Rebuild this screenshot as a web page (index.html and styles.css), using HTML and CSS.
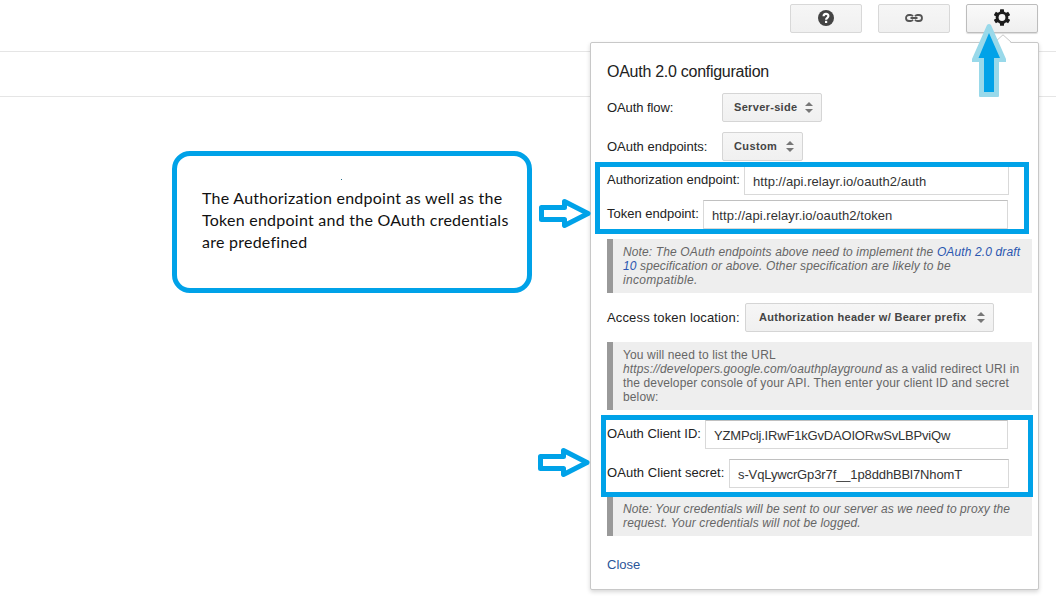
FILE: index.html
```html
<!DOCTYPE html>
<html lang="en">
<head>
<meta charset="utf-8">
<title>OAuth 2.0 configuration</title>
<link rel="stylesheet" href="styles.css">
</head>
<body>
<header class="toolbar">
  <button class="tool" aria-label="Help">
    <svg width="16" height="16" viewBox="0 0 16 16"><circle cx="8" cy="8" r="8" fill="#444"/><path d="M5.600 6.200C5.600 3.200 10.400 3.200 10.400 6C10.400 7.800 8.100 7.800 8.100 9.800" fill="none" stroke="#fff" stroke-width="2.200"/><rect x="7" y="10.800" width="2.200" height="2.200" fill="#fff"/></svg>
  </button>
  <button class="tool" aria-label="Link">
    <svg width="18" height="8" viewBox="0 0 18 8" fill="none" stroke="#555" stroke-width="1.8"><path d="M8 2.200C7.300 1.300 6.500 1 5.500 1H4C2.200 1 1 2.200 1 4S2.200 7 4 7H5.500C6.500 7 7.300 6.700 8 5.800M10 2.200C10.700 1.300 11.500 1 12.500 1H14C15.800 1 17 2.200 17 4S15.800 7 14 7H12.500C11.500 7 10.700 6.700 10 5.800M5.500 4H12.500"/></svg>
  </button>
  <button class="tool active" aria-label="Settings">
    <svg width="16" height="17" viewBox="-8 -8.500 16 17"><g fill="#1c1c1c"><rect x="-2" y="-8.300" width="4" height="16.600" rx=".6"/><rect x="-2" y="-8.300" width="4" height="16.600" rx=".6" transform="rotate(60)"/><rect x="-2" y="-8.300" width="4" height="16.600" rx=".6" transform="rotate(120)"/><circle r="6.300"/></g><circle r="3.400" fill="#f5f5f5"/></svg>
  </button>
</header>
<div class="subbar"></div>

<section class="panel">
  <svg class="caret" width="18" height="10" viewBox="0 0 18 10"><path d="M0 10L9 1L18 10" fill="#fff"/><path d="M.5 8.500L9 .8L17.500 8.500" fill="none" stroke="#c8c8c8"/></svg>
  <h1>OAuth 2.0 configuration</h1>
  <div class="row"><label class="fixed flow">OAuth flow:</label><button class="select server"><span>Server-side</span><i class="updown"></i></button></div>
  <div class="row"><label class="fixed">OAuth endpoints:</label><button class="select custom"><span>Custom</span><i class="updown"></i></button></div>
  <div class="row tight"><label class="auth-label">Authorization endpoint:</label><div class="field to-edge auth">http://api.relayr.io/oauth2/auth</div></div>
  <div class="row tight"><label class="token-label">Token endpoint:</label><div class="field token">http://api.relayr.io/oauth2/token</div></div>
  <p class="note"><em>Note: The OAuth endpoints above need to implement the <a>OAuth 2.0 draft</a><br><a>10</a> specification or above. Other specification are likely to be<br><span class="wide">incompatible.</span></em></p>
  <div class="row"><label class="access-label">Access token location:</label><button class="select bearer"><span>Authorization header w/ Bearer prefix</span><i class="updown"></i></button></div>
  <p class="note">You will need to list the URL<br><em>https://developers.google.com/oauthplayground</em> as a valid redirect URI in<br>the developer console of your API. Then enter your client ID and secret<br>below:</p>
  <div class="row"><label class="id-label">OAuth Client ID:</label><div class="field client-id">YZMPclj.IRwF1kGvDAOIORwSvLBPviQw</div></div>
  <div class="row"><label class="secret-label">OAuth Client secret:</label><div class="field to-edge secret">s-VqLywcrGp3r7f__1p8ddhBBl7NhomT</div></div>
  <p class="note last"><em><span class="narrow">Note: Your credentials will be sent to our server as we need to proxy the</span><br>request. Your credentials will not be logged.</em></p>
  <a class="close">Close</a>
</section>

<div class="frame endpoints"></div>
<div class="frame credentials"></div>
<div class="callout">The Authorization endpoint as well as the<br>Token endpoint and the OAuth credentials<br>are predefined<i class="dot"></i></div>
<svg class="arrow first" width="52" height="30" viewBox="0 0 52 30"><path d="M2.500 8.500H25.500V2.500L49 14.500L25.500 26.500V20.500H2.500Z"/></svg>
<svg class="arrow second" width="52" height="30" viewBox="0 0 52 30"><path d="M2.500 8.500H25.500V2.500L49 14.500L25.500 26.500V20.500H2.500Z"/></svg>
<svg class="pointer" width="34" height="73" viewBox="0 0 34 73"><path d="M15 1Q17 -1 19 1L34 35V38H27V72Q27 73 26 73H8Q7 73 7 72V38H0V35Z" fill="#99d9ea"/><path d="M17 9L28 34H22V68H12V34H6.500Z" fill="#00a2e8"/></svg>
</body>
</html>
```
FILE: styles.css
```css
* { box-sizing: border-box; }
body {
  margin: 0;
  height: 608px;
  position: relative;
  overflow: hidden;
  background: #fff;
  color: #222;
  font: 13px/20px "Liberation Sans", Arial, sans-serif;
}
button { font: inherit; color: inherit; padding: 0; }
.toolbar {
  display: flex;
  justify-content: flex-end;
  gap: 16px;
  height: 52px;
  padding: 4px 18px 0 0;
  border-bottom: 1px solid #e5e5e5;
}
.tool {
  display: flex;
  align-items: center;
  justify-content: center;
  width: 72px;
  height: 29px;
  padding-bottom: 2px;
  border: 1px solid #d8d8d8;
  border-radius: 2px;
  background: linear-gradient(#f6f6f6, #f0f0f0);
}
.tool.active {
  border-color: #bdbdbd;
  background: linear-gradient(#fafafa, #efefef);
  box-shadow: 0 1px 1px #ddd;
}
.subbar { height: 45px; border-bottom: 1px solid #e5e5e5; }

.panel {
  position: absolute;
  left: 590px;
  top: 42px;
  width: 449px;
  height: 548px;
  padding: 19px 6px 0 16px;
  border: 1px solid #c8c8c8;
  border-radius: 2px;
  background: #fff;
  box-shadow: 0 2px 4px rgba(0, 0, 0, .16);
}
.caret { position: absolute; left: 403px; top: -9px; }
h1 { margin: 0 0 11px; font-size: 16px; font-weight: 400; line-height: 20px; letter-spacing: -.27px; }
.row { display: flex; height: 29px; margin-top: 10px; padding-right: 24px; }
.row.tight { margin-top: 5px; }
.row:has(.to-edge) { padding-right: 23px; }
label { flex: none; line-height: 28px; white-space: nowrap; }
.fixed { width: 115px; line-height: 30px; }
.flow { letter-spacing: -.08px; }
.auth-label { width: 137px; }
.token-label { width: 96px; }
.access-label { width: 138px; line-height: 30px; letter-spacing: .15px; }
.id-label { width: 98px; }
.secret-label { width: 122px; letter-spacing: .05px; }
.select {
  display: flex;
  align-items: center;
  justify-content: space-between;
  padding: 0 8px 1px 11px;
  border: 1px solid #d5d5d5;
  border-radius: 2px;
  background: linear-gradient(#f6f6f6, #f0f0f0);
  color: #444;
  font-size: 11px;
  font-weight: 700;
  white-space: nowrap;
}
.server { width: 100px; letter-spacing: .32px; }
.custom { width: 81px; letter-spacing: .38px; }
.bearer { width: 249px; padding-left: 13px; letter-spacing: .32px; }
.updown { display: flex; flex-direction: column; gap: 3px; }
.updown::before, .updown::after { content: ""; border: 4px solid transparent; }
.updown::before { border-top: 0; border-bottom: 4px solid #777; }
.updown::after { border-bottom: 0; border-top: 4px solid #777; }
.field {
  flex: 1;
  padding-left: 8px;
  border: 1px solid #d9d9d9;
  border-top-color: #c0c0c0;
  color: #333;
  line-height: 29px;
  white-space: nowrap;
}
.auth { letter-spacing: .06px; }
.token { letter-spacing: .08px; }
.client-id { letter-spacing: -.18px; }
.secret { letter-spacing: -.12px; }
.note {
  margin: 10px 0 0;
  padding: 6px 0 6px 10px;
  border-left: 6px solid #999;
  background: #eee;
  color: #666;
  font-size: 12px;
  line-height: 14px;
  letter-spacing: .13px;
  white-space: nowrap;
}
.note.last { margin-top: 8px; }
.wide { letter-spacing: .3px; }
.narrow { letter-spacing: .07px; }
a { color: #2a56b0; }
.close { display: block; margin-top: 19px; color: #2a5599; }

.frame { position: absolute; border: 5px solid #00a2e8; }
.endpoints { left: 595px; top: 162px; width: 434px; height: 72px; }
.credentials { left: 601px; top: 415px; width: 432px; height: 82px; }
.callout {
  position: absolute;
  left: 172px;
  top: 151px;
  width: 360px;
  height: 142px;
  padding: 31px 0 0 25px;
  border: 5px solid #00a2e8;
  border-radius: 18px;
  color: #111;
  font: 16px/22px Lato, sans-serif;
  letter-spacing: .25px;
  white-space: nowrap;
}
.dot { position: absolute; left: 164px; top: 23px; width: 1px; height: 1px; background: #28708c; }
.arrow { position: absolute; fill: #fff; stroke: #00a2e8; stroke-width: 5; stroke-linejoin: round; }
.first { left: 539px; top: 199px; }
.second { left: 538px; top: 448px; }
.pointer { position: absolute; left: 972px; top: 24px; }
```
